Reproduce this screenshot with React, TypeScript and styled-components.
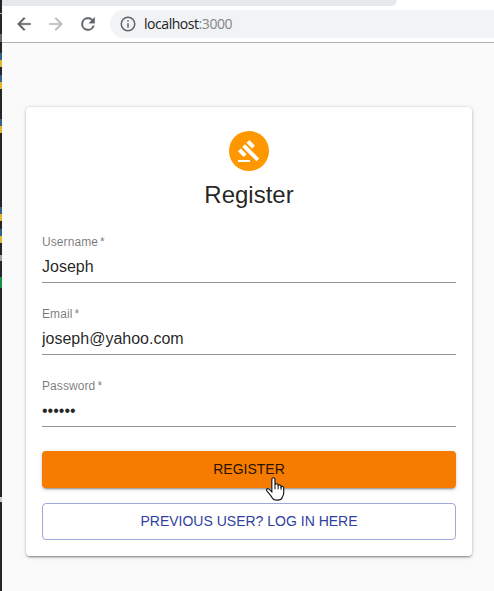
import React from "react";
import styled, { createGlobalStyle } from "styled-components";

const GlobalStyle = createGlobalStyle`
  * { box-sizing: border-box; }
  body { margin: 0; background: #fafafa; overflow: hidden; }
`;

const Screen = styled.div`
  display: flex;
  width: 494px;
  height: 591px;
  overflow: hidden;
  font-family: "Liberation Sans", Arial, sans-serif;
`;

const DesktopEdge = styled.div`
  flex: 0 0 2px;
  display: flex;
  flex-direction: column;
  background: #26262a;
`;

const EdgeMark = styled.i<{ $gap: number; $size: number; $color: string }>`
  flex: 0 0 ${(p) => p.$size}px;
  margin-top: ${(p) => p.$gap}px;
  background: ${(p) => p.$color};
`;

const Browser = styled.div`
  flex: 1;
  min-width: 0;
  display: flex;
  flex-direction: column;
  background: #fafafa;
`;

const BrowserHeader = styled.header`
  height: 43px;
  background: #fff;
  border-bottom: 1px solid #b1b1b1;
`;

const TabStrip = styled.div`
  width: 395px;
  height: 6px;
  background: #e5e9ec;
  border-bottom-right-radius: 8px;
`;

const Toolbar = styled.div`
  display: flex;
  align-items: center;
  height: 36px;
  padding-left: 12px;
`;

const NavIcon = styled.svg<{ $color: string }>`
  width: 20px;
  height: 20px;
  margin-right: 12px;
  fill: ${(p) => p.$color};
  stroke: ${(p) => p.$color};
  stroke-width: 0.4;
`;

const AddressBar = styled.div`
  flex: 1;
  height: 28px;
  display: flex;
  align-items: center;
  padding-left: 9px;
  background: #f1f3f4;
  border-radius: 14px 0 0 14px;
`;

const InfoIcon = styled.svg`
  width: 18px;
  height: 18px;
  margin-right: 7px;
  fill: #5f6368;
`;

const Url = styled.span`
  font: 14px/20px "Open Sans", "Noto Sans", sans-serif;
  letter-spacing: -0.45px;
  color: #202124;
`;

const Port = styled.span`
  color: #80868b;
`;

const Page = styled.main`
  flex: 1;
  padding: 64px 22px 0 24px;
`;

const Card = styled.form`
  display: flex;
  flex-direction: column;
  align-items: center;
  height: 449px;
  padding: 24px 16px 16px;
  background: #fff;
  border-radius: 4px;
  box-shadow: 0 3px 1px -2px rgba(0, 0, 0, 0.2), 0 2px 2px rgba(0, 0, 0, 0.14),
    0 1px 5px rgba(0, 0, 0, 0.12), 0 0 2px rgba(0, 0, 0, 0.16);
`;

const Avatar = styled.div`
  display: grid;
  place-items: center;
  width: 40px;
  height: 40px;
  border-radius: 50%;
  background: #ff9800;

  svg { width: 24px; height: 24px; fill: #fff; }
`;

const Title = styled.h1`
  margin: 8px 0 0;
  font-size: 24px;
  font-weight: 400;
  line-height: 32px;
  color: rgba(0, 0, 0, 0.87);
`;

const Field = styled.label`
  display: flex;
  flex-direction: column;
  width: 100%;
  height: 48px;
  margin-top: 24px;
  border-bottom: 1px solid #949494;
`;

const FieldLabel = styled.span`
  height: 16px;
  padding-top: 1px;
  font-size: 12px;
  line-height: 12px;
  letter-spacing: 0.08px;
  word-spacing: -1.3px;
  color: rgba(0, 0, 0, 0.54);
`;

const Input = styled.input`
  width: 100%;
  height: 31px;
  padding: 7px 0 6px;
  border: 0;
  outline: 0;
  background: none;
  font: 16px "Liberation Sans", Arial, sans-serif;
  color: rgba(0, 0, 0, 0.87);
`;

const Button = styled.button`
  width: 100%;
  height: 36.5px;
  flex-shrink: 0;
  padding: 0;
  border: 0;
  border-radius: 4px;
  font: 14px/24.5px "Liberation Sans", Arial, sans-serif;
  text-transform: uppercase;
`;

const PrimaryButton = styled(Button)`
  position: relative;
  margin-top: 24px;
  background: #f57c00;
  color: rgba(0, 0, 0, 0.87);
  box-shadow: 0 3px 1px -2px rgba(0, 0, 0, 0.2), 0 2px 2px rgba(0, 0, 0, 0.14),
    0 1px 5px rgba(0, 0, 0, 0.12);
`;

const SecondaryButton = styled(Button)`
  margin-top: 15.5px;
  background: transparent;
  border: 1px solid rgba(63, 81, 181, 0.5);
  color: #303f9f;
`;

const Pointer = styled.svg`
  position: absolute;
  left: 223px;
  top: 25px;
  width: 21px;
  height: 25.5px;
`;

const edgeMarks = [
  { gap: 13, size: 1, color: "#b8b8b8" },
  { gap: 20, size: 8, color: "#68686a" },
  { gap: 11, size: 7, color: "#32638c" },
  { gap: 0, size: 7, color: "#e3b52b" },
  { gap: 8, size: 7, color: "#32638c" },
  { gap: 0, size: 7, color: "#e3b52b" },
  { gap: 30, size: 7, color: "#32638c" },
  { gap: 0, size: 7, color: "#e3b52b" },
  { gap: 74, size: 7, color: "#32638c" },
  { gap: 0, size: 7, color: "#e3b52b" },
  { gap: 8, size: 7, color: "#32638c" },
  { gap: 0, size: 7, color: "#e3b52b" },
  { gap: 12, size: 6, color: "#a0a0a0" },
  { gap: 16, size: 11, color: "#168f45" },
  { gap: 209, size: 5, color: "#d0d0d0" },
];

const fields = [
  { label: "Username", type: "text", value: "Joseph" },
  { label: "Email", type: "text", value: "joseph@yahoo.com" },
  { label: "Password", type: "password", value: "secret" },
];

export default function App() {
  return (
    <Screen>
      <GlobalStyle />
      <DesktopEdge>
        {edgeMarks.map((m, i) => (
          <EdgeMark key={i} $gap={m.gap} $size={m.size} $color={m.color} />
        ))}
      </DesktopEdge>
      <Browser>
        <BrowserHeader>
          <TabStrip />
          <Toolbar>
            <NavIcon viewBox="0 0 24 24" $color="#5f6368">
              <path d="M20 11H7.83l5.59-5.59L12 4l-8 8 8 8 1.41-1.41L7.83 13H20z" />
            </NavIcon>
            <NavIcon viewBox="0 0 24 24" $color="#babcbe">
              <path d="M12 4l-1.41 1.41L16.17 11H4v2h12.17l-5.58 5.59L12 20l8-8z" />
            </NavIcon>
            <NavIcon viewBox="0 0 24 24" $color="#5f6368">
              <path d="M17.65 6.35A7.96 7.96 0 0 0 12 4a8 8 0 1 0 7.73 10h-2.08A6 6 0 1 1 12 6c1.66 0 3.14.69 4.22 1.78L13 11h7V4z" />
            </NavIcon>
            <AddressBar>
              <InfoIcon viewBox="0 0 24 24">
                <path d="M11 7h2v2h-2zm0 4h2v6h-2zm1-9a10 10 0 1 0 0 20 10 10 0 0 0 0-20zm0 18a8 8 0 1 1 0-16 8 8 0 0 1 0 16z" />
              </InfoIcon>
              <Url>
                localhost<Port>:3000</Port>
              </Url>
            </AddressBar>
          </Toolbar>
        </BrowserHeader>
        <Page>
          <Card>
            <Avatar>
              <svg viewBox="0 0 24 24">
                <path d="M1 21h12v2H1zM5.245 8.07l2.83-2.827 14.14 14.142-2.828 2.828zM12.317 1l5.657 5.656-2.83 2.83-5.654-5.66zM3.825 9.485l5.657 5.657-2.828 2.828-5.657-5.657z" />
              </svg>
            </Avatar>
            <Title>Register</Title>
            {fields.map((f) => (
              <Field key={f.label}>
                <FieldLabel>{f.label} *</FieldLabel>
                <Input type={f.type} defaultValue={f.value} />
              </Field>
            ))}
            <PrimaryButton type="button">
              Register
              <Pointer viewBox="0 0 20 24">
                <path
                  d="M6.5 15V3.1c0-2.1 3-2.1 3 0v5.2c.1-1.4 2.8-1.4 3 .2v.6c.5-1.2 2.6-.8 2.8.6v.6c.8-1 2.5-.4 2.5 1v5.1c0 2.1-1.5 3-1.5 4.2-1 2.9-8 3.1-9.3.2-.7-1.7-2.8-3.8-5.1-6.5-1.4-1.8.4-3.1 1.8-2.1z"
                  fill="#fff"
                  stroke="#15151c"
                  strokeWidth="1.1"
                />
                <path d="M9.5 8v4.5M12.5 9v3.5M15.3 10v3" stroke="#15151c" fill="none" />
              </Pointer>
            </PrimaryButton>
            <SecondaryButton type="button">Previous user? Log in here</SecondaryButton>
          </Card>
        </Page>
      </Browser>
    </Screen>
  );
}
